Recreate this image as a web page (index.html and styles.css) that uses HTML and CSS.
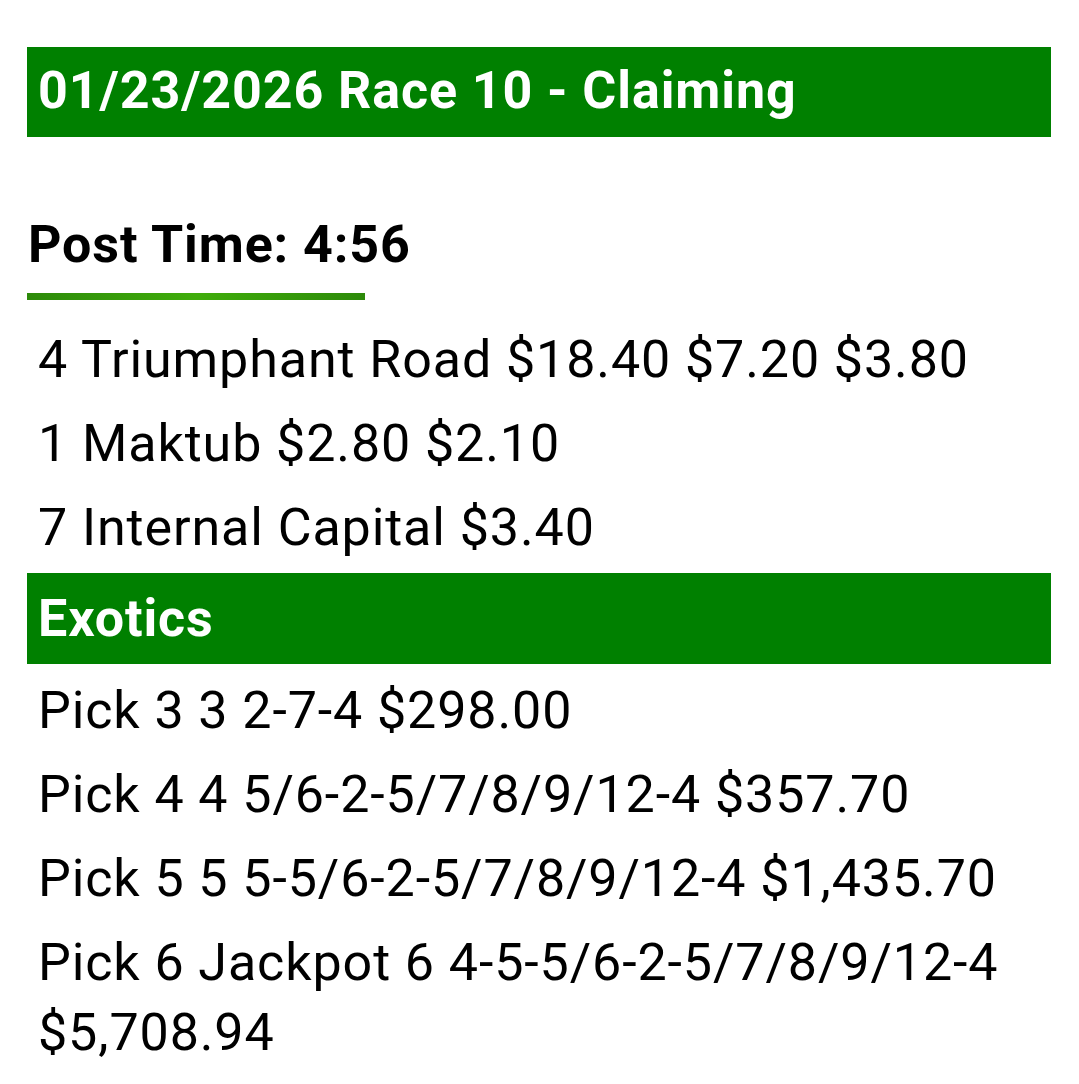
FILE: index.html
```html
<!DOCTYPE html>
<html>
<head>
<meta charset="utf-8">
<link rel="stylesheet" href="styles.css">
</head>
<body>
<div class="page">
  <h1 class="bar title">01/23/2026 Race 10 - Claiming</h1>
  <h2 class="post">Post Time: 4:56</h2>
  <div class="rule"></div>
  <div class="results">
    <p class="line">4 Triumphant Road $18.40 $7.20 $3.80</p>
    <p class="line">1 Maktub $2.80 $2.10</p>
    <p class="line">7 Internal Capital $3.40</p>
  </div>
  <h2 class="bar section">Exotics</h2>
  <div class="exotics">
    <p class="line">Pick 3 3 2-7-4 $298.00</p>
    <p class="line">Pick 4 4 5/6-2-5/7/8/9/12-4 $357.70</p>
    <p class="line">Pick 5 5 5-5/6-2-5/7/8/9/12-4 $1,435.70</p>
    <p class="line">Pick 6 Jackpot 6 4-5-5/6-2-5/7/8/9/12-4 $5,708.94</p>
  </div>
</div>
</body>
</html>
```
FILE: styles.css
```css
html, body {
  margin: 0;
  padding: 0;
  background: #fff;
}
body {
  font-family: Roboto, "Noto Sans", sans-serif;
  color: #000;
  font-size: 52px;
  letter-spacing: 0.9px;
}
.page {
  width: 1024px;
  margin-left: 27px;
  padding-top: 47px;
}
.bar {
  margin: 0;
  background: #008000;
  color: #fff;
  font-size: 52px;
  font-weight: 700;
  display: flex;
  align-items: center;
  padding: 0 11px;
  box-sizing: border-box;
}
.title {
  height: 90px;
  padding-bottom: 3px;
}
.post {
  margin: 78px 0 0 1px;
  font-size: 52px;
  font-weight: 700;
  line-height: 60px;
}
.rule {
  width: 338px;
  height: 7px;
  margin-top: 18px;
  background: linear-gradient(to right, #2d8a0a, #40ad0b 50%, #2d8a0a);
}
.results {
  padding: 25px 0 10px 11px;
}
.line {
  margin: 0;
  font-size: 52px;
  line-height: 70px;
}
.line + .line {
  margin-top: 14px;
}
.section {
  height: 91px;
}
.exotics {
  padding: 12px 0 0 11px;
}
```
